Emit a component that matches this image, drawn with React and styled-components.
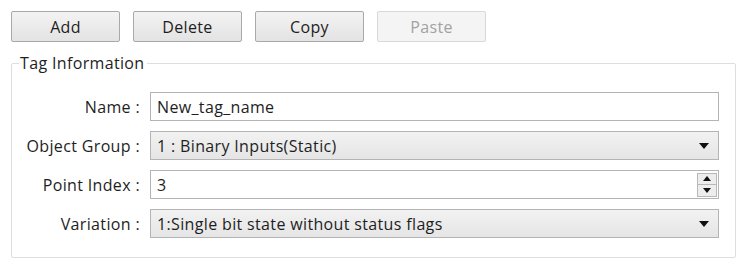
import styled, { createGlobalStyle } from "styled-components";
import React from "react";

const GlobalStyle = createGlobalStyle`
  html, body {
    margin: 0;
    padding: 0;
    background: #ffffff;
  }
  body {
    font-family: "Open Sans", "Noto Sans", sans-serif;
    color: #1e1e1e;
  }
`;

const buttons = [
  { id: "add", label: "Add" },
  { id: "delete", label: "Delete" },
  { id: "copy", label: "Copy" },
  { id: "paste", label: "Paste", disabled: true },
];

const fields = [
  { id: "name", label: "Name :", kind: "text", value: "New_tag_name" },
  { id: "group", label: "Object Group :", kind: "select", value: "1 : Binary Inputs(Static)" },
  { id: "index", label: "Point Index :", kind: "spin", value: "3" },
  { id: "variation", label: "Variation :", kind: "select", value: "1:Single bit state without status flags" },
];

function DownArrow() {
  return (
    <svg width="10" height="6" viewBox="0 0 10 6">
      <path d="M0 0 H10 L5 6 Z" fill="#111" />
    </svg>
  );
}

function SpinArrow({ up }) {
  return (
    <svg width="8" height="5" viewBox="0 0 8 5">
      <path d={up ? "M0 5 H8 L4 0 Z" : "M0 0 H8 L4 5 Z"} fill="#111" />
    </svg>
  );
}

export default function App() {
  return (
    <>
      <GlobalStyle />
      <Page>
        <Toolbar>
          {buttons.map((b) => (
            <ActionButton key={b.id} disabled={b.disabled}>
              {b.label}
            </ActionButton>
          ))}
        </Toolbar>
        <GroupBox>
          <Legend>Tag Information</Legend>
          <FormGrid>
            {fields.map((f) => (
              <React.Fragment key={f.id}>
                <Label>{f.label}</Label>
                {f.kind === "select" ? (
                  <SelectBox>
                    <span>{f.value}</span>
                    <DownArrow />
                  </SelectBox>
                ) : (
                  <TextBox>
                    <span>{f.value}</span>
                    {f.kind === "spin" && (
                      <Spinner>
                        <SpinHalf><SpinArrow up /></SpinHalf>
                        <SpinHalf><SpinArrow /></SpinHalf>
                      </Spinner>
                    )}
                  </TextBox>
                )}
              </React.Fragment>
            ))}
          </FormGrid>
        </GroupBox>
      </Page>
    </>
  );
}

const Page = styled.div`
  width: 749px;
  height: 270px;
  box-sizing: border-box;
  padding: 11px 14px 0 11px;
  font-size: 16px;
  letter-spacing: 0.35px;
`;

const Toolbar = styled.div`
  display: flex;
  gap: 13px;
`;

const ActionButton = styled.button`
  width: 109px;
  height: 31px;
  box-sizing: border-box;
  border: 1px solid ${({ disabled }) => (disabled ? "#d8d8d8" : "#a9a9a9")};
  border-radius: 2px;
  background: ${({ disabled }) =>
    disabled ? "#f4f4f4" : "linear-gradient(#f3f3f3, #e3e3e3)"};
  color: ${({ disabled }) => (disabled ? "#a2a2a2" : "#1e1e1e")};
  font-family: "Open Sans", "Noto Sans", sans-serif;
  font-size: 16px;
  letter-spacing: 0.35px;
  padding: 0;
`;

const GroupBox = styled.fieldset`
  margin: 11px 0 0 0;
  border: 1px solid #dedede;
  border-radius: 2px;
  padding: 19px 16px 19px 0;
  width: 725px;
  box-sizing: border-box;
`;

const Legend = styled.legend`
  padding: 0 2px 0 1px;
  margin-left: 7px;
  line-height: 20px;
  color: #1e1e1e;
`;

const FormGrid = styled.div`
  display: grid;
  grid-template-columns: 128px 1fr;
  column-gap: 10px;
  row-gap: 10px;
  align-items: center;
`;

const Label = styled.div`
  text-align: right;
  white-space: nowrap;
`;

const fieldBase = `
  height: 29px;
  box-sizing: border-box;
  border: 1px solid #b4b4b4;
  display: flex;
  align-items: center;
  justify-content: space-between;
  padding-left: 6px;
`;

const TextBox = styled.div`
  ${fieldBase}
  background: #ffffff;
  padding-right: 1px;
`;

const SelectBox = styled.div`
  ${fieldBase}
  background: linear-gradient(#f2f2f2, #e5e5e5);
  padding-right: 9px;
`;

const Spinner = styled.div`
  display: flex;
  flex-direction: column;
  width: 20px;
  height: 24px;
  box-sizing: border-box;
  border: 1px solid #b8b8b8;
`;

const SpinHalf = styled.div`
  flex: 1;
  display: flex;
  align-items: center;
  justify-content: center;
  background: #ededed;
  & + & {
    border-top: 1px solid #b8b8b8;
  }
`;
